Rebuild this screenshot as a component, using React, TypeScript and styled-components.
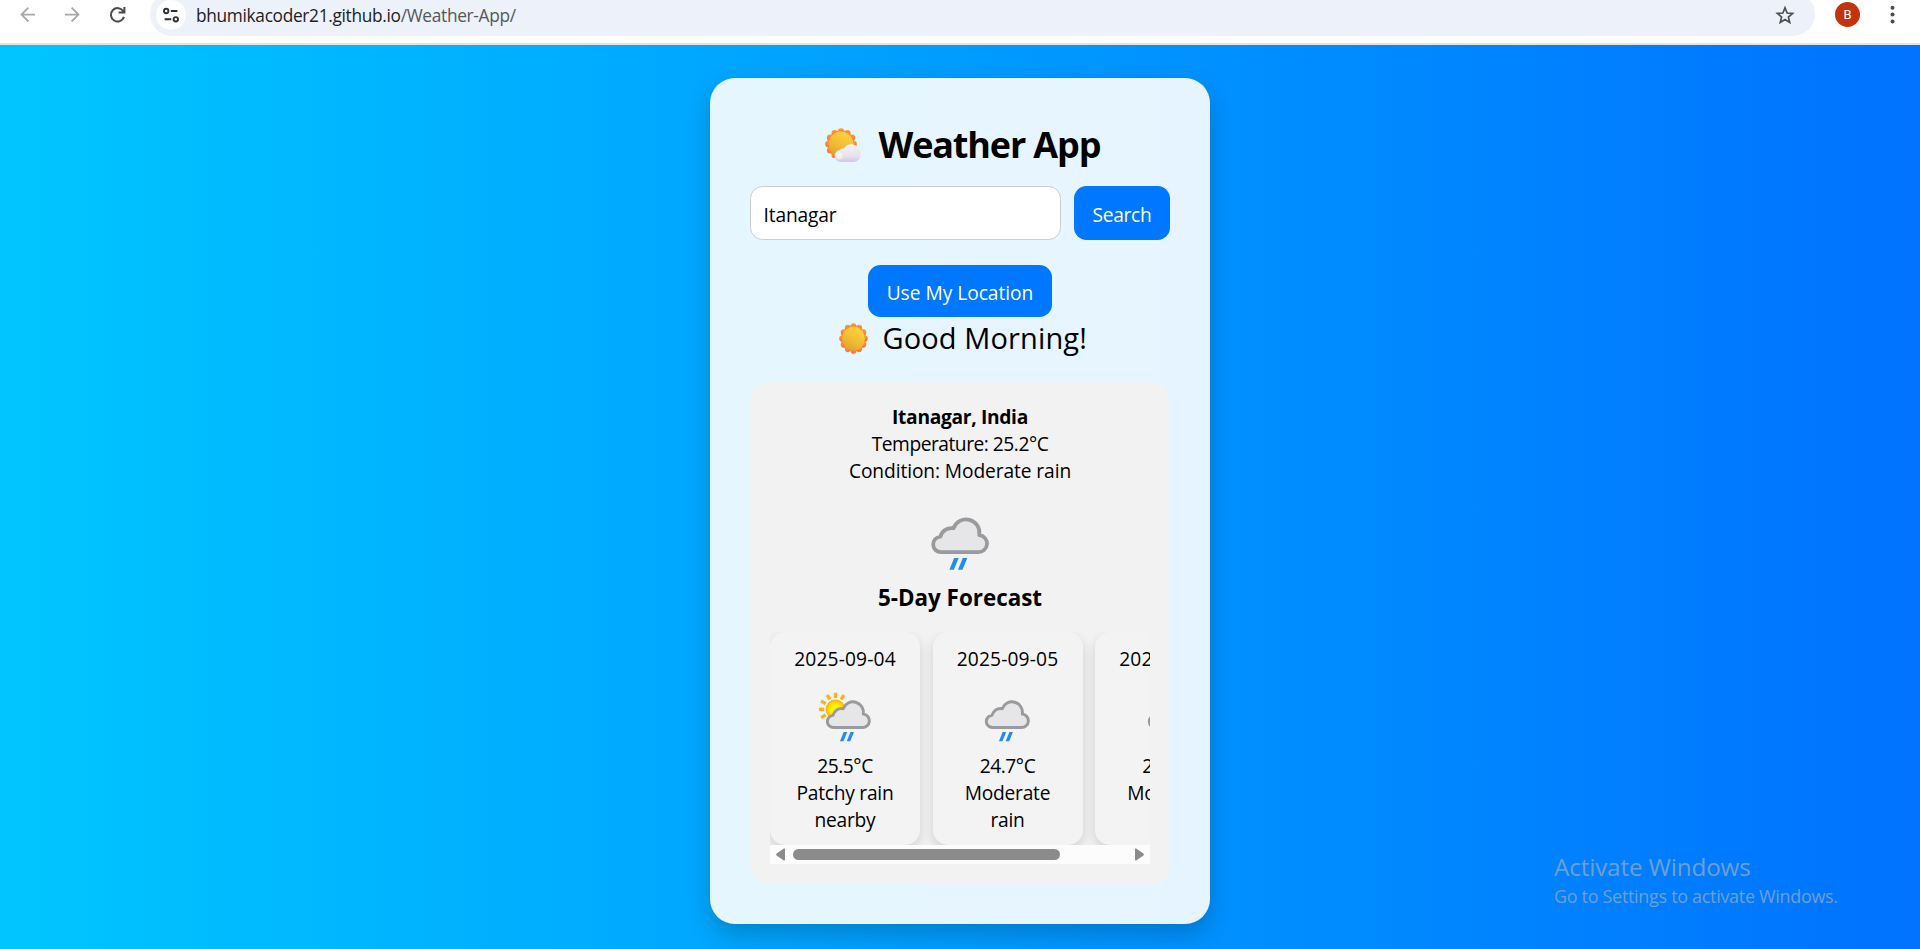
import React from 'react';
import styled, { createGlobalStyle } from 'styled-components';

const Global = createGlobalStyle`
  * { box-sizing: border-box; }
  body { margin: 0; overflow: hidden; font-family: "Open Sans", "Noto Sans", sans-serif; color: #000; }
`;

const Screen = styled.div`
  position: relative;
  display: flex;
  flex-direction: column;
  height: 949px;
  overflow: hidden;
`;

const Toolbar = styled.header`
  display: flex;
  align-items: flex-start;
  flex: none;
  height: 45px;
  background: #fff;
  border-bottom: 2px solid #e4e4e0;
`;

const NavIcons = styled.div`
  display: flex;
  width: 150px;
  flex: none;
  svg { display: block; }
`;

const AddressBar = styled.div`
  display: flex;
  align-items: center;
  flex: none;
  width: 1665px;
  height: 44px;
  margin-top: -8px;
  padding: 2px 20px 0 6px;
  border-radius: 22px;
  background: #edf1fa;
`;

const SiteInfo = styled.div`
  width: 30px;
  height: 30px;
  margin-right: 10px;
  border-radius: 50%;
  background: #fff;
  svg { display: block; }
`;

const Url = styled.div`
  flex: 1;
  padding-top: 2px;
  font-size: 17.3px;
  line-height: 24px;
  letter-spacing: -0.31px;
  color: #202124;
  white-space: nowrap;
`;

const UrlPath = styled.span`
  color: #54575b;
`;

const Avatar = styled.div`
  width: 25px;
  height: 25px;
  margin: 2px 0 0 20px;
  border-radius: 50%;
  background: #c2330e;
  color: #fff;
  font: 13px/25px Roboto, sans-serif;
  text-align: center;
`;

const MenuIcon = styled.svg`
  margin-left: 26px;
`;

const Page = styled.main`
  display: flex;
  flex: 1;
  justify-content: center;
  align-items: flex-start;
  padding-top: 33px;
  background: linear-gradient(to right, #00c6ff, #0072ff);
`;

const WeatherCard = styled.section`
  width: 500px;
  height: 846px;
  padding: 40px;
  border-radius: 25px;
  background: rgba(255, 255, 255, 0.9);
  box-shadow: 0 10px 25px rgba(0, 0, 0, 0.2);
`;

const Title = styled.h1`
  display: flex;
  align-items: center;
  gap: 17.5px;
  height: 50px;
  margin: 0 0 18px;
  padding: 3px 0 0 75px;
  font-size: 36px;
  line-height: 50px;
  letter-spacing: -1.15px;
  white-space: nowrap;
  svg { margin-top: 2px; }
`;

const SearchRow = styled.div`
  display: flex;
  gap: 13px;
  height: 54px;
  margin-bottom: 25px;
`;

const CityInput = styled.input`
  width: 311px;
  padding: 3px 12.5px 0;
  border: 1px solid #ccc;
  border-radius: 12.5px;
  outline: none;
  background: #fff;
  font: 19.2px "Open Sans", sans-serif;
  letter-spacing: -0.15px;
  color: #000;
`;

const Button = styled.button<{ $width: number; $height: number; $spacing: number }>`
  display: block;
  width: ${p => p.$width}px;
  height: ${p => p.$height}px;
  padding: 3px 0 0;
  border: 0;
  border-radius: 12.5px;
  background: #0077ff;
  color: #fff;
  font: 19.2px "Open Sans", sans-serif;
  letter-spacing: ${p => p.$spacing}px;
`;

const Centered = styled.div`
  display: flex;
  justify-content: center;
`;

const Greeting = styled.div`
  display: flex;
  align-items: center;
  gap: 14.5px;
  height: 40px;
  margin-bottom: 25px;
  padding: 2px 0 0 89px;
  font-size: 29px;
  line-height: 40px;
  letter-spacing: 0.12px;
  white-space: nowrap;
`;

const Panel = styled.section`
  height: 502px;
  padding: 21px 20px 20px;
  border-radius: 19px;
  background: #f2f2f2;
  text-align: center;
`;

const Line = styled.div<{ $bold?: boolean; $spacing?: number }>`
  font-size: 19.2px;
  line-height: 27px;
  font-weight: ${p => (p.$bold ? 700 : 400)};
  letter-spacing: ${p => p.$spacing ?? -0.15}px;
`;

const ConditionIcon = styled.svg`
  display: block;
  margin: 10px auto 7.5px;
`;

const ForecastTitle = styled.h3`
  margin: 0 0 18.5px;
  font-size: 22.4px;
  line-height: 32px;
`;

const ForecastStrip = styled.div`
  display: flex;
  gap: 12.5px;
  height: 213px;
  overflow: hidden;
`;

const DayCard = styled.article`
  flex: 0 0 150px;
  height: 213px;
  padding: 13px 18px 0;
  border-radius: 15px;
  background: #f3f3f3;
  box-shadow: 0 5px 12px rgba(0, 0, 0, 0.14);
`;

const ScrollTrack = styled.div`
  display: flex;
  align-items: center;
  height: 19px;
  padding: 0 6px;
  background: #fcfcfc;
`;

const ScrollThumb = styled.div`
  width: 267px;
  height: 11px;
  margin: 0 75px 0 8px;
  border-radius: 6px;
  background: #8b8b8b;
`;

const Watermark = styled.aside`
  position: absolute;
  left: 1554px;
  top: 850px;
  color: #6f9fd0;
  white-space: nowrap;
`;

const WatermarkTitle = styled.div`
  font-size: 24.2px;
  line-height: 34px;
  letter-spacing: -0.12px;
`;

const WatermarkText = styled.div`
  font-size: 17.9px;
  line-height: 25px;
  letter-spacing: -0.27px;
`;

const scallops = Array.from({ length: 12 }, (_, i) => (i * Math.PI) / 6 - Math.PI / 2);

const SunShape = () => (
  <>
    <defs>
      <linearGradient id="sunRim" x1="0" y1="0" x2="0" y2="1">
        <stop offset="0" stopColor="#ff9a2e" />
        <stop offset="1" stopColor="#f4763c" />
      </linearGradient>
      <linearGradient id="sunFace" x1="0.7" y1="0.1" x2="0.25" y2="1">
        <stop offset="0" stopColor="#ffcf3a" />
        <stop offset="0.5" stopColor="#f2bc35" />
        <stop offset="1" stopColor="#dda32d" />
      </linearGradient>
    </defs>
    <g fill="url(#sunRim)">
      <circle cx="16" cy="16" r="13.6" />
      {scallops.map(a => (
        <circle key={a} cx={16 + 12.6 * Math.cos(a)} cy={16 + 12.6 * Math.sin(a)} r="3.2" />
      ))}
    </g>
    <circle cx="16" cy="16" r="12.4" fill="url(#sunFace)" />
  </>
);

const SunEmoji = () => (
  <svg width="29" height="31" viewBox="0 0 32 32" preserveAspectRatio="none">
    <SunShape />
  </svg>
);

const SunCloudEmoji = () => (
  <svg width="36" height="35" viewBox="0 0 36 35">
    <defs>
      <linearGradient id="puff" x1="0" y1="0" x2="0" y2="1">
        <stop offset="0" stopColor="#f4f2f5" />
        <stop offset="0.65" stopColor="#e6e3ec" />
        <stop offset="1" stopColor="#d3c4ee" />
      </linearGradient>
    </defs>
    <SunShape />
    <path
      d="M15.5 34A6 6 0 0 1 9.6 28A6 6 0 0 1 15 22C16.2 20.8 17.6 20.4 19 20.6A8.2 8.2 0 0 1 33.2 20C35.2 21.4 36 23.6 36 26A7.9 7.9 0 0 1 28.6 34Z"
      fill="url(#puff)"
    />
    <circle cx="14.4" cy="28" r="3.4" fill="#fff" opacity="0.5" />
  </svg>
);

const RainCloud = () => (
  <>
    <path
      d="M17.1 46.5A6.1 6.1 0 0 1 16.3 34.2A9 9 0 0 1 26.8 27.4A10.7 10.7 0 0 1 47.4 32.9A6.8 6.8 0 0 1 46.2 46.5Z"
      fill="#e6e6e8"
      stroke="#999a9b"
      strokeWidth="3"
      strokeLinejoin="round"
    />
    <path d="M27.3 51.2h3.6l-3.8 9.4h-3.6zM34.2 51.2h3.6l-3.8 9.4h-3.6z" fill="#238cec" />
  </>
);

const SunBehindCloud = () => (
  <>
    <defs>
      <radialGradient id="glow">
        <stop offset="0.45" stopColor="#fff200" />
        <stop offset="0.75" stopColor="#ffd800" />
        <stop offset="1" stopColor="#ffa512" />
      </radialGradient>
    </defs>
    <circle cx="22" cy="28" r="10" fill="url(#glow)" />
    {[-120, -90, -60, -30, 0, 30].map(a => (
      <path
        key={a}
        d="M22 11v5.4"
        stroke="#ffb01a"
        strokeWidth="3.4"
        transform={`rotate(${a} 22 28)`}
      />
    ))}
    <g transform="translate(3.1 0)">
      <RainCloud />
    </g>
  </>
);

const days = [
  { date: '2025-09-04', temp: '25.5°C', text: 'Patchy rain nearby', Icon: SunBehindCloud },
  { date: '2025-09-05', temp: '24.7°C', text: 'Moderate rain', Icon: RainCloud },
  { date: '2025-09-06', temp: '24.9°C', text: 'Moderate rain', Icon: RainCloud },
];

export default function App() {
  return (
    <Screen>
      <Global />
      <Toolbar>
        <NavIcons>
          <svg width="150" height="36" viewBox="0 0 150 36" fill="none" strokeWidth="1.8">
            <path d="M35 14.6H21.6M28.4 7.7L21.5 14.6L28.4 21.5" stroke="#a9a9a9" />
            <path d="M65 14.6H78.4M71.6 7.7L78.5 14.6L71.6 21.5" stroke="#a9a9a9" />
            <path d="M123.4 11.4A6.7 6.7 0 1 0 124 16.9M124.4 7V12.4H118.6" stroke="#4a4a4a" strokeWidth="2" />
          </svg>
        </NavIcons>
        <AddressBar>
          <SiteInfo>
            <svg width="30" height="30" viewBox="0 0 30 30" fill="none" stroke="#303134" strokeWidth="1.9">
              <circle cx="10.2" cy="11" r="2.2" />
              <path d="M14.8 11H21.4M8.6 19.3H15.2" />
              <circle cx="19.8" cy="19.3" r="2.2" />
            </svg>
          </SiteInfo>
          <Url>
            bhumikacoder21.github.io<UrlPath>/Weather-App/</UrlPath>
          </Url>
          <svg width="20" height="20" viewBox="0 0 20 20" fill="none" stroke="#4c4e52" strokeWidth="1.7">
            <path d="M10 2.8L12.1 8L17.6 8.4L13.4 12L14.7 17.4L10 14.5L5.3 17.4L6.6 12L2.4 8.4L7.9 8Z" />
          </svg>
        </AddressBar>
        <Avatar>B</Avatar>
        <MenuIcon width="12" height="30" viewBox="0 0 12 30" fill="#4a4b4e">
          <circle cx="6.5" cy="7.7" r="2" />
          <circle cx="6.5" cy="14.5" r="2" />
          <circle cx="6.5" cy="21.4" r="2" />
        </MenuIcon>
      </Toolbar>
      <Page>
        <WeatherCard>
          <Title>
            <SunCloudEmoji />
            Weather App
          </Title>
          <SearchRow>
            <CityInput defaultValue="Itanagar" />
            <Button $width={96} $height={54} $spacing={-0.3}>Search</Button>
          </SearchRow>
          <Centered>
            <Button $width={184} $height={52} $spacing={-0.03}>Use My Location</Button>
          </Centered>
          <Greeting>
            <SunEmoji />
            Good Morning!
          </Greeting>
          <Panel>
            <Line $bold $spacing={-0.32}>Itanagar, India</Line>
            <Line $spacing={-0.48}>Temperature: 25.2°C</Line>
            <Line $spacing={-0.1}>Condition: Moderate rain</Line>
            <ConditionIcon width="80" height="80" viewBox="0 0 64 64">
              <RainCloud />
            </ConditionIcon>
            <ForecastTitle>5-Day Forecast</ForecastTitle>
            <ForecastStrip>
              {days.map(({ date, temp, text, Icon }) => (
                <DayCard key={date}>
                  <Line $spacing={0.15}>{date}</Line>
                  <ConditionIcon width="62.5" height="62.5" viewBox="0 0 64 64">
                    <Icon />
                  </ConditionIcon>
                  <Line $spacing={-0.45}>{temp}</Line>
                  <Line $spacing={-0.25}>{text}</Line>
                </DayCard>
              ))}
            </ForecastStrip>
            <ScrollTrack>
              <svg width="9" height="13" viewBox="0 0 9 13" fill="#8b8b8b">
                <path d="M9 1.2V11.8Q9 13 7.8 12.4L0.6 7.4Q-0.4 6.5 0.6 5.6L7.8 0.6Q9 0 9 1.2Z" />
              </svg>
              <ScrollThumb />
              <svg width="9" height="13" viewBox="0 0 9 13" fill="#8b8b8b">
                <path d="M0 1.2V11.8Q0 13 1.2 12.4L8.4 7.4Q9.4 6.5 8.4 5.6L1.2 0.6Q0 0 0 1.2Z" />
              </svg>
            </ScrollTrack>
          </Panel>
        </WeatherCard>
      </Page>
      <Watermark>
        <WatermarkTitle>Activate Windows</WatermarkTitle>
        <WatermarkText>Go to Settings to activate Windows.</WatermarkText>
      </Watermark>
    </Screen>
  );
}
